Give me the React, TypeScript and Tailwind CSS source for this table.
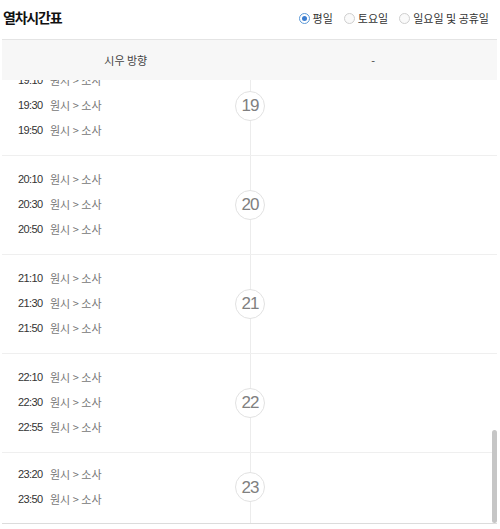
import React from "react";

type Sec = { hour: string; times: string[]; last?: boolean };

const sections: Sec[] = [
  { hour: "19", times: ["19:10", "19:30", "19:50"] },
  { hour: "20", times: ["20:10", "20:30", "20:50"] },
  { hour: "21", times: ["21:10", "21:30", "21:50"] },
  { hour: "22", times: ["22:10", "22:30", "22:55"] },
  { hour: "23", times: ["23:20", "23:50"], last: true },
];

function Radio({ label, checked }: { label: string; checked?: boolean }) {
  return (
    <div className="flex items-center gap-[3px]">
      {checked ? (
        <span className="w-[11px] h-[11px] rounded-full border border-[#5d9ad8] bg-white flex items-center justify-center">
          <span className="w-[5px] h-[5px] rounded-full bg-[#3b7dd0]" />
        </span>
      ) : (
        <span className="w-[11px] h-[11px] rounded-full border border-[#cfcfcf] bg-[#fafafa]" />
      )}
      <span className="text-[11px] leading-none text-[#333]">{label}</span>
    </div>
  );
}

export default function App() {
  return (
    <div className="w-[500px] h-[529px] bg-white relative overflow-hidden font-['Noto_Sans_CJK_KR',sans-serif]">
      <div className="flex items-center justify-between h-[39px] pl-[3px] pr-[11px] pb-[6px]">
        <h1 className="text-[14px] font-bold tracking-[-1.2px] text-[#111] leading-none">열차시간표</h1>
        <div className="flex items-center gap-[11px] pt-[4px]">
          <Radio label="평일" checked />
          <Radio label="토요일" />
          <Radio label="일요일 및 공휴일" />
        </div>
      </div>
      <div className="ml-[2px] w-[495px]">
        <div className="grid grid-cols-2 h-[41px] bg-[#f7f7f7] border-t border-[#e4e4e4] items-center text-center text-[11px] text-[#444]">
          <div>시우 방향</div>
          <div>-</div>
        </div>
        <div className="relative h-[444px] overflow-hidden border-b border-[#dcdcdc]">
          <div className="absolute left-[248px] top-0 bottom-0 w-px bg-[#ececec]" />
          <div className="-mt-[23px] relative">
            {sections.map((s) => (
              <div
                key={s.hour}
                className={
                  s.last
                    ? "grid grid-cols-[233px_30px_1fr] items-center pt-[9px] pb-[11px]"
                    : "grid grid-cols-[233px_30px_1fr] items-center pt-[11px] pb-[12px] border-b border-[#efefef]"
                }
              >
                <div className="flex flex-col">
                  {s.times.map((t) => (
                    <div key={t} className="h-[25px] flex items-center pl-[16px]">
                      <span className="w-[32px] font-['Liberation_Sans',sans-serif] text-[11px] tracking-[-0.6px] text-[#333]">
                        {t}
                      </span>
                      <span className="text-[11px] text-[#777]">원시 &gt; 소사</span>
                    </div>
                  ))}
                </div>
                <div className="w-[30px] h-[30px] rounded-full border border-[#e2e2e2] bg-white flex items-center justify-center">
                  <span className="font-['Liberation_Sans',sans-serif] text-[17px] tracking-[-1px] text-[#808080] leading-none">
                    {s.hour}
                  </span>
                </div>
                <div />
              </div>
            ))}
          </div>
          <div className="absolute right-[0px] top-[350px] w-[5px] h-[93px] rounded-[3px] bg-[#c6c6c6]" />
        </div>
      </div>
    </div>
  );
}
